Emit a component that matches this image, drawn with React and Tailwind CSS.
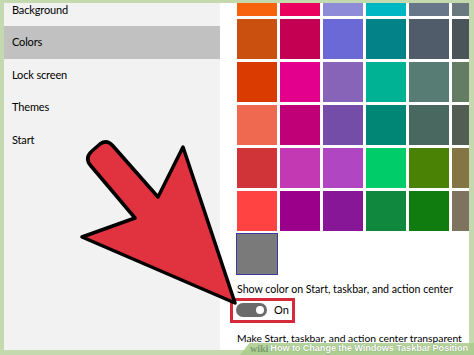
const swatches = [
  "#f7630c", "#ea005e", "#8e8cd8", "#00b7c3", "#68768a", "#69797e",
  "#ca5010", "#c30052", "#6b69d6", "#038387", "#515c6b", "#4a5459",
  "#da3b01", "#e3008c", "#8764b8", "#00b294", "#567c73", "#647c64",
  "#ef6950", "#bf0077", "#744da9", "#018574", "#486860", "#525e54",
  "#d13438", "#c239b3", "#b146c2", "#00cc6a", "#498205", "#847545",
  "#ff4343", "#9a0089", "#881798", "#10893e", "#107c10", "#7e735f",
];

const menu = ["Background", "Colors", "Lock screen", "Themes", "Start"];

function Arrow() {
  return (
    <svg
      className="absolute inset-0 pointer-events-none"
      width="474"
      height="355"
      viewBox="0 0 474 355"
    >
      <path
        d="M135 218 L91 166 Q84 158 92 151 L100 144 Q107 139 113 146 L158 197 L183 147 L235 303 L82 237 Z"
        fill="#e0323f"
        stroke="#000"
        strokeWidth="3.5"
        strokeLinejoin="round"
      />
    </svg>
  );
}

export default function App() {
  return (
    <div className="relative w-[474px] h-[355px] overflow-hidden bg-[#c4daae] pt-[3px] pl-[4px] pr-[5px] pb-[5px] flex font-['Lato',sans-serif] text-black">
      <aside className="w-[216px] bg-[#f2f2f2] overflow-hidden">
        <div className="-mt-[9px]">
          {menu.map((item) => (
            <div
              key={item}
              className={
                "h-[32.4px] flex items-center pl-[8px] text-[11px] tracking-[-0.15px] " +
                (item === "Colors" ? "bg-[#c1c1c1]" : "")
              }
            >
              {item}
            </div>
          ))}
        </div>
      </aside>

      <main className="flex-1 bg-white overflow-hidden">
        <div className="-mt-[27px] pl-[17px] grid grid-cols-[repeat(6,40px)] gap-[3px]">
          {swatches.map((c, i) => (
            <div key={i} className="h-[40px]" style={{ backgroundColor: c }} />
          ))}
          <div className="h-[40px] bg-[#7a7a7a] outline-[1.5px] outline-solid outline-[#3b3a9a]" />
        </div>

        <p className="mt-[8px] pl-[17px] text-[10.6px] leading-[14px] whitespace-nowrap">
          Show color on Start, taskbar, and action center
        </p>

        <div className="mt-[1px] ml-[10px] inline-flex items-center h-[25px] border-[3px] border-[#d42a3a] pl-[3px] pr-[3px]">
          <div className="w-[31px] h-[14px] rounded-full bg-[#6b6b6b] flex items-center justify-end pr-[3px]">
            <div className="w-[8px] h-[8px] rounded-full bg-white" />
          </div>
          <span className="ml-[7px] text-[11px] leading-[14px]">On</span>
        </div>

        <p className="mt-[8px] pl-[17px] text-[10.3px] leading-[14px] whitespace-nowrap">
          Make Start, taskbar, and action center transparent
        </p>
      </main>

      <Arrow />

      <div className="absolute right-0 bottom-0 w-[234px] h-[12px] bg-[#a8cb8c]/85 [clip-path:polygon(4%_0,100%_0,100%_100%,0_100%)] flex items-center pl-[10px] gap-[2px] whitespace-nowrap">
        <span className="font-['Liberation_Serif',serif] font-bold text-[10px] text-[#7f9a70] leading-none">wiki</span>
        <span className="font-['Liberation_Sans',sans-serif] font-bold text-[9.2px] tracking-[-0.1px] text-white leading-none [text-shadow:0_0_1px_rgba(80,110,60,0.8)]">
          How to Change the Windows Taskbar Position
        </span>
      </div>
    </div>
  );
}
